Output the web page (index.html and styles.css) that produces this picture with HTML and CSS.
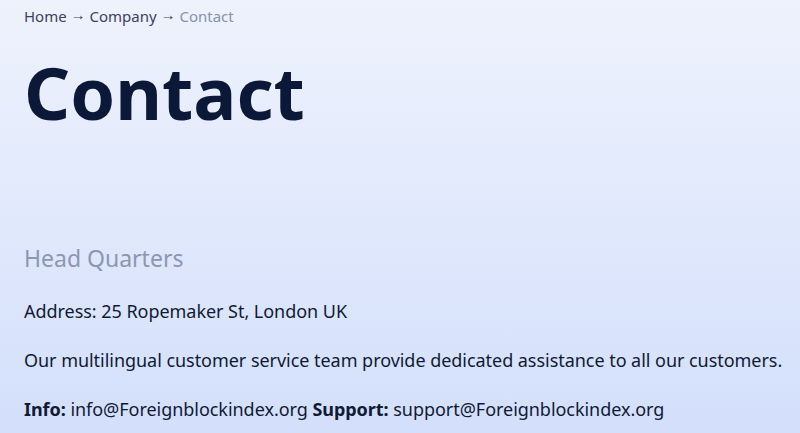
FILE: index.html
```html
<!DOCTYPE html>
<html lang="en">
<head>
    <meta charset="UTF-8">
    <meta name="viewport" content="width=device-width, initial-scale=1.0">
    <title>Contact</title>
    <link rel="stylesheet" href="styles.css">
</head>
<body>
    <div class="page">
        <nav class="breadcrumb">
            <a href="#">Home</a> <span class="sep">&rarr;</span> <a href="#">Company</a> <span class="sep">&rarr;</span> <span class="current">Contact</span>
        </nav>
        <h1>Contact</h1>

        <section class="hq">
            <h2>Head Quarters</h2>
            <p>Address: 25 Ropemaker St, London UK</p>
            <p>Our multilingual customer service team provide dedicated assistance to all our customers.</p>
            <p><b>Info:</b> info@Foreignblockindex.org <b>Support:</b> support@Foreignblockindex.org</p>
        </section>
    </div>
</body>
</html>
```

FILE: styles.css
```css
html, body {
    height: 100%;
}

body {
    margin: 0;
    font-family: "Noto Sans", "Open Sans", sans-serif;
    color: #101a36;
    background: linear-gradient(180deg, #eef2fc 0%, #d3dffb 100%);
}

.page {
    padding: 6px 8px 0 24px;
}

.breadcrumb {
    font-size: 15px;
    line-height: 20px;
    color: #3a4260;
}

.breadcrumb a {
    color: #3a4260;
    text-decoration: none;
}

.breadcrumb .sep {
    line-height: 0;
    vertical-align: 2px;
}

.breadcrumb .current {
    color: #8891ad;
}

h1 {
    font-size: 72px;
    font-weight: 700;
    line-height: 1;
    color: #0b1838;
    margin: 30px 0 0;
}

.hq {
    margin-top: 114px;
}

.hq h2 {
    font-size: 23px;
    line-height: 32px;
    font-weight: 400;
    color: #8c97b3;
    margin: 0 0 24px;
}

.hq p {
    font-size: 18px;
    line-height: 26px;
    margin: 0 0 23px;
    color: #101a36;
    letter-spacing: -0.04px;
}

.hq b {
    font-weight: 700;
}
```
